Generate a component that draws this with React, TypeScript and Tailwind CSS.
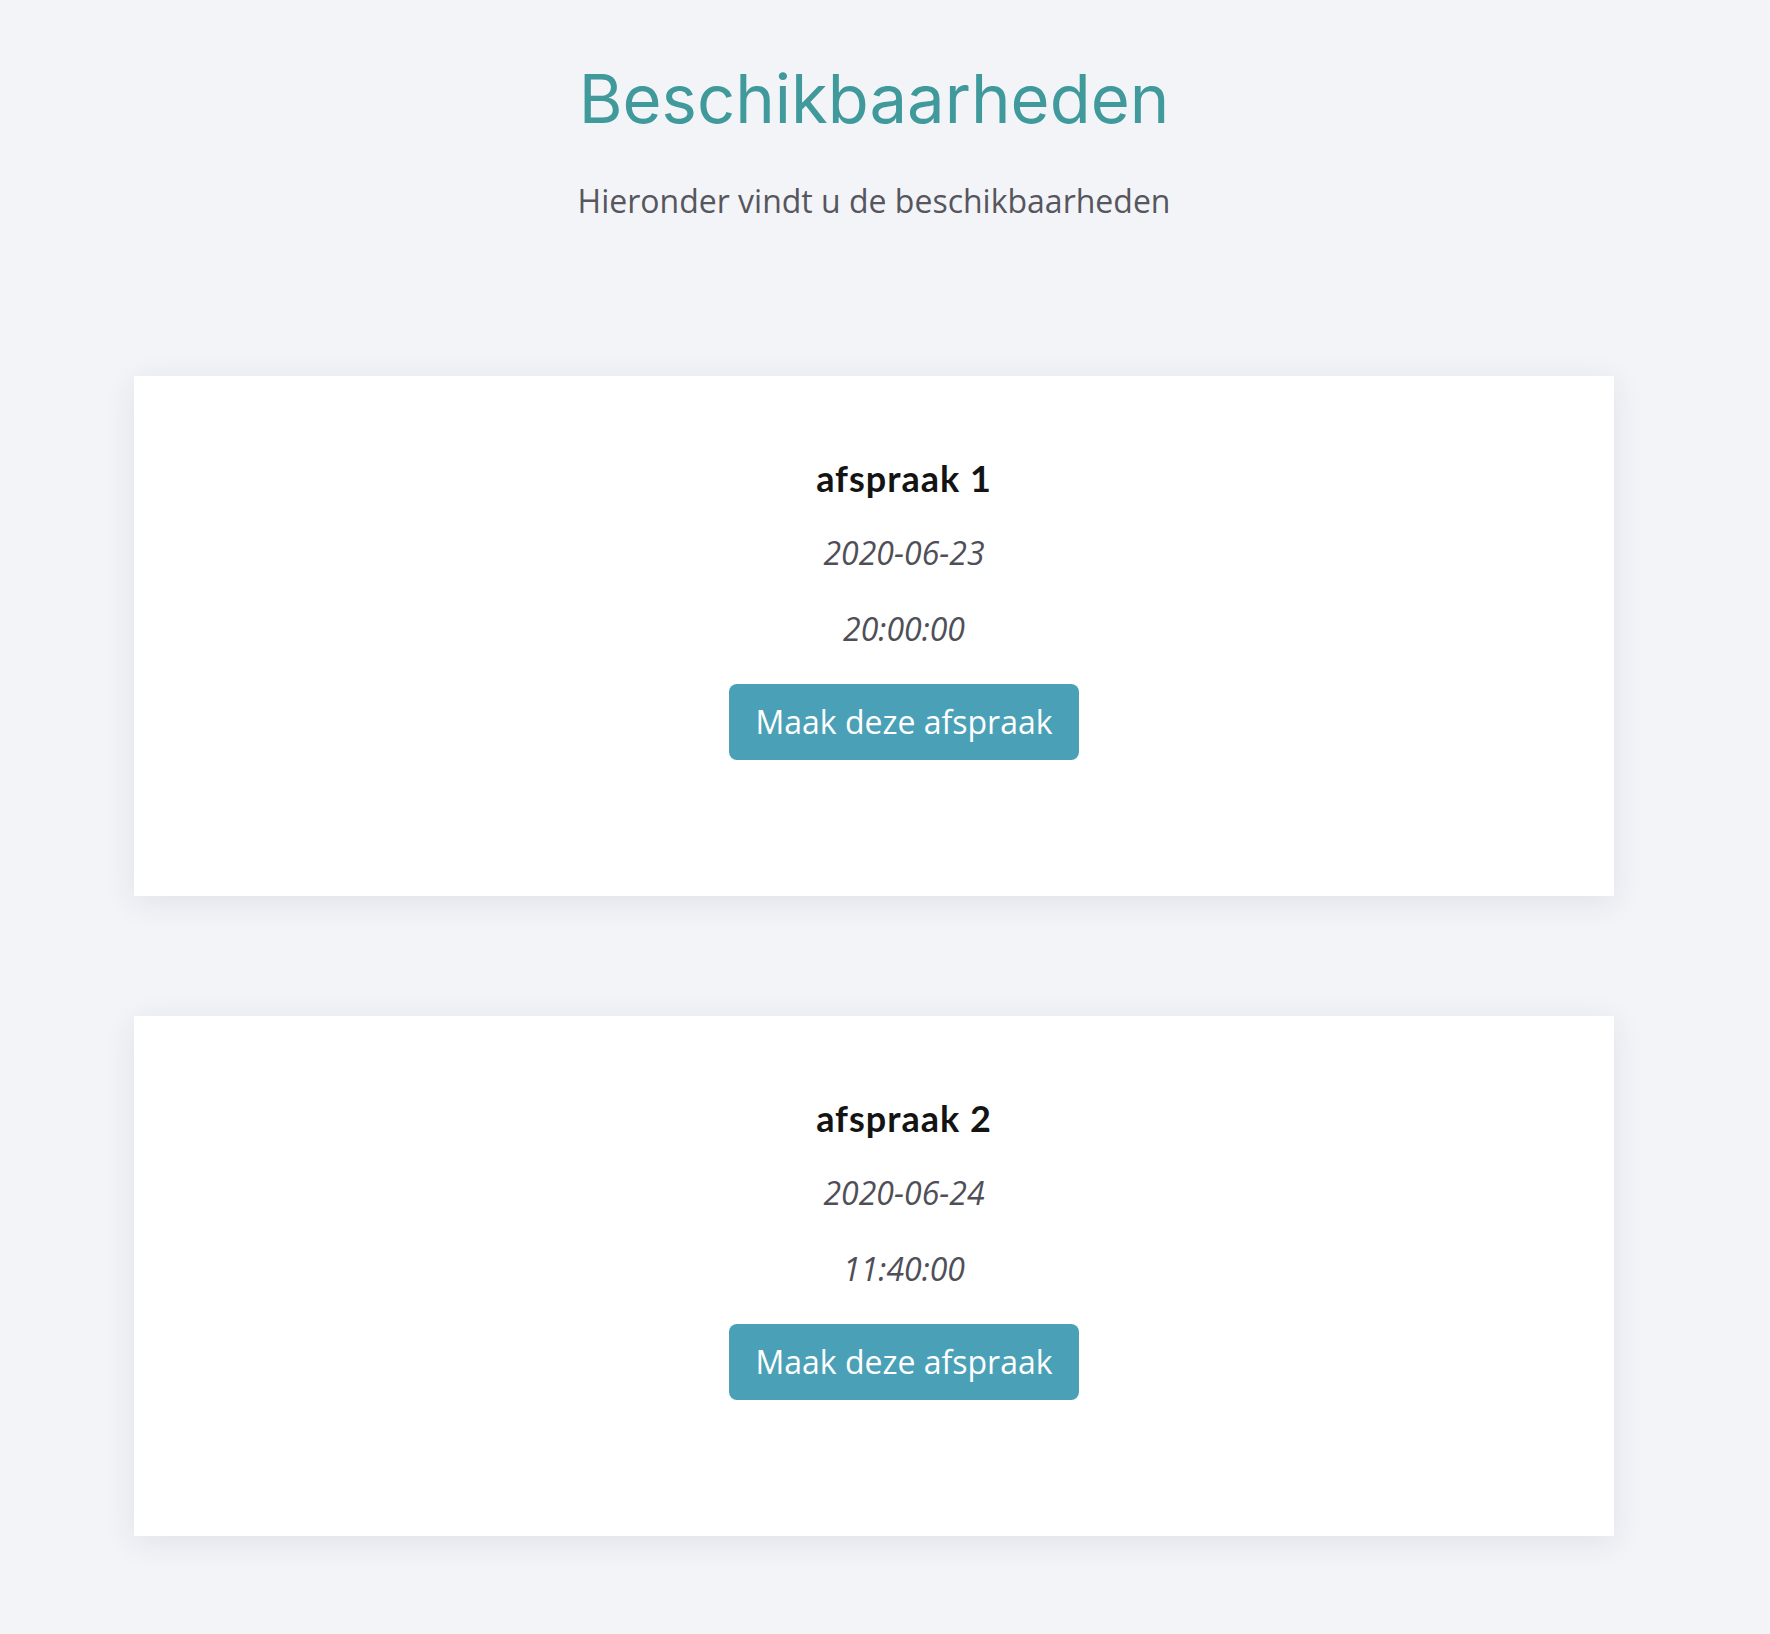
const afspraken = [
  { id: 1, datum: '2020-06-23', tijd: '20:00:00' },
  { id: 2, datum: '2020-06-24', tijd: '11:40:00' },
]

function AfspraakCard({ id, datum, tijd }: { id: number; datum: string; tijd: string }) {
  return (
    <div className="bg-white w-[1480px] h-[520px] pl-[60px] pt-[80px] shadow-[0_6px_30px_rgba(40,40,80,0.09)] flex flex-col items-center">
      <h3 className="font-['Lato'] font-bold text-[36px] leading-[44px] tracking-[1px] text-[#141414]">afspraak {id}</h3>
      <p className="mt-[31px] italic text-[32px] leading-[44px] text-[#4f4f57] font-['Open_Sans']">{datum}</p>
      <p className="mt-[32px] italic text-[32px] leading-[44px] text-[#4f4f57] font-['Open_Sans']">{tijd}</p>
      <button className="mt-[33px] h-[76px] px-[26px] rounded-[8px] bg-[#4aa1b7] text-white text-[32px] font-['Open_Sans']">
        Maak deze afspraak
      </button>
    </div>
  )
}

export default function App() {
  return (
    <div className="min-h-[1634px] bg-[#f3f4f8] w-[1770px]">
      <div className="w-[1748px] flex flex-col items-center pt-[51px] pb-[98px]">
        <h1 className="font-['Inter'] font-normal text-[67px] leading-[96px] text-[#40999b]">
          Beschikbaarheden
        </h1>
        <p className="mt-[32px] font-['Open_Sans'] text-[32px] leading-[44px] text-[#56565e]">
          Hieronder vindt u de beschikbaarheden
        </p>
        <div className="mt-[153px] flex flex-col gap-[120px]">
          {afspraken.map((a) => (
            <AfspraakCard key={a.id} {...a} />
          ))}
        </div>
      </div>
    </div>
  )
}
